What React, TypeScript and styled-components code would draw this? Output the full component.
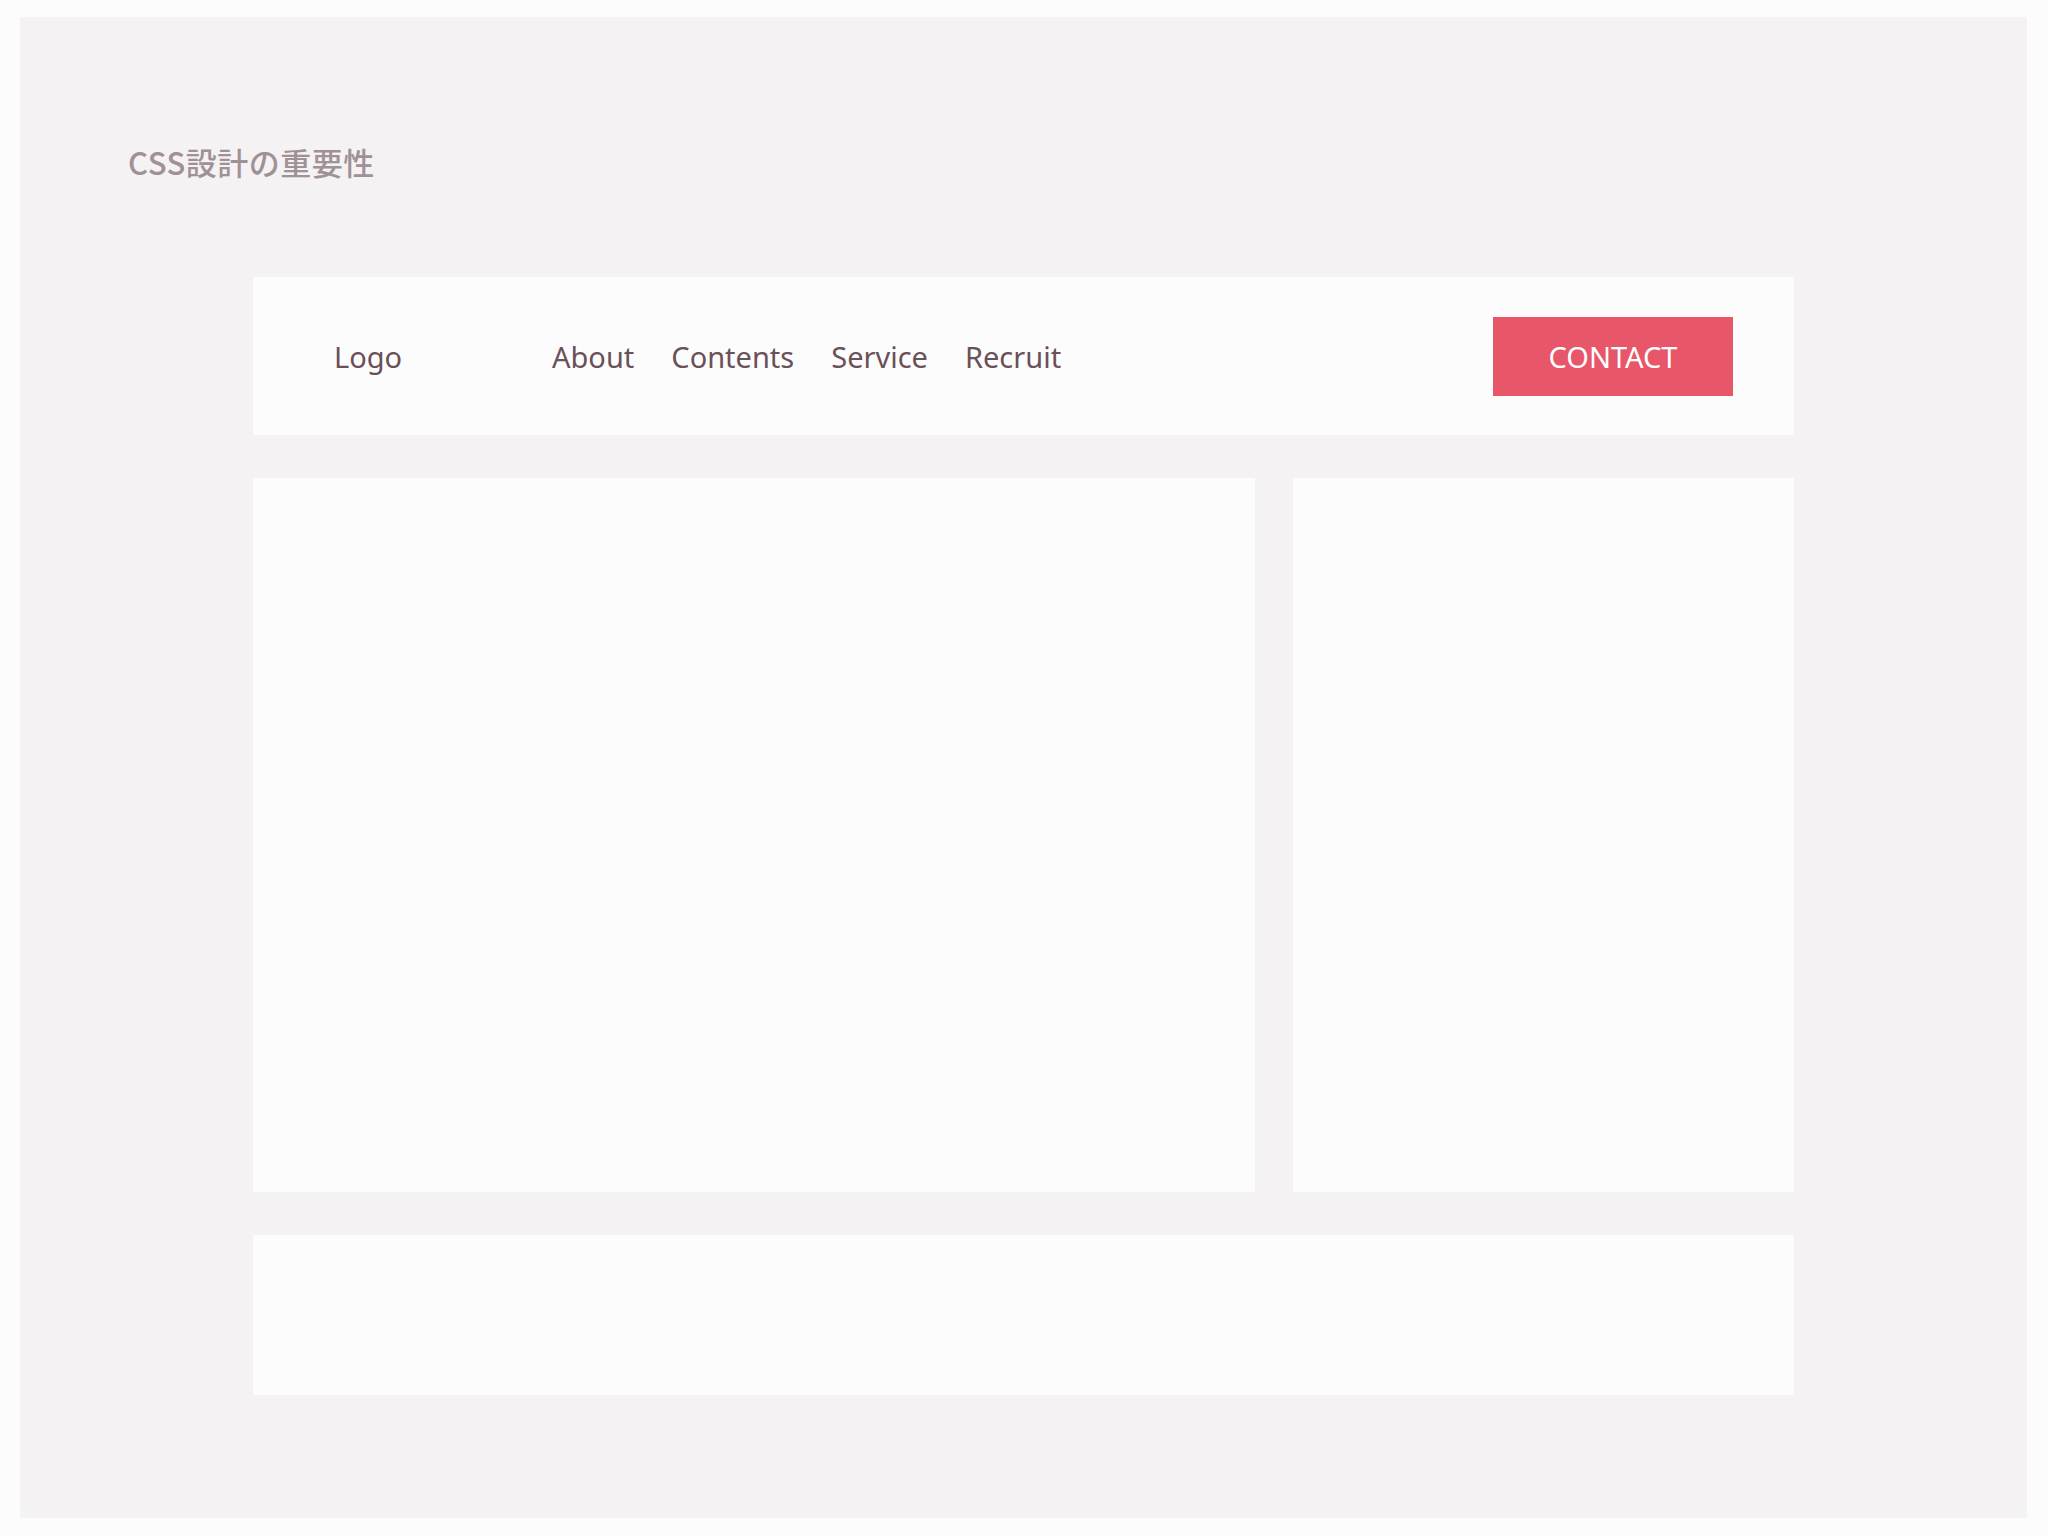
import React from "react";
import styled, { createGlobalStyle } from "styled-components";

const Global = createGlobalStyle`
  html, body { margin: 0; padding: 0; background: #fdfcfc; }
  body { font-family: "Noto Sans", "Noto Sans CJK JP", sans-serif; }
`;

const Page = styled.div`
  padding: 17px 21px 18px 20px;
`;

const Panel = styled.div`
  background: #f4f2f3;
  height: 1501px;
  box-sizing: border-box;
  padding: 118px 0 0 108px;
  display: flex;
  flex-direction: column;
`;

const Title = styled.h1`
  margin: 0;
  font-family: "Noto Sans CJK JP", sans-serif;
  font-weight: 500;
  font-size: 31px;
  line-height: 54px;
  color: #a09196;
  letter-spacing: 0.5px;
`;

const Layout = styled.div`
  margin: 88px 0 0 125px;
  width: 1541px;
  display: flex;
  flex-direction: column;
  gap: 43px;
`;

const Card = styled.div<{ $h: number }>`
  background: #fdfcfc;
  height: ${(p) => p.$h}px;
`;

const Header = styled.header`
  background: #fdfcfc;
  height: 158px;
  display: flex;
  align-items: center;
  padding: 0 61px 0 81px;
  box-sizing: border-box;
  color: #6a5058;
  font-size: 29px;
`;

const Logo = styled.div`
  width: 218px;
`;

const Nav = styled.nav`
  display: flex;
  gap: 37px;
  flex: 1;
`;

const Contact = styled.button`
  width: 240px;
  height: 79px;
  border: none;
  background: #e8566a;
  color: #fff;
  font-family: "Noto Sans", sans-serif;
  font-size: 29px;
  font-weight: 400;
`;

const Row = styled.div`
  display: grid;
  grid-template-columns: 1002px 1fr;
  gap: 38px;
`;

export default function App() {
  return (
    <Page>
      <Global />
      <Panel>
        <Title>CSS設計の重要性</Title>
        <Layout>
          <Header>
            <Logo>Logo</Logo>
            <Nav>
              <span>About</span>
              <span>Contents</span>
              <span>Service</span>
              <span>Recruit</span>
            </Nav>
            <Contact>CONTACT</Contact>
          </Header>
          <Row>
            <Card $h={714} />
            <Card $h={714} />
          </Row>
          <Card $h={160} />
        </Layout>
      </Panel>
    </Page>
  );
}
